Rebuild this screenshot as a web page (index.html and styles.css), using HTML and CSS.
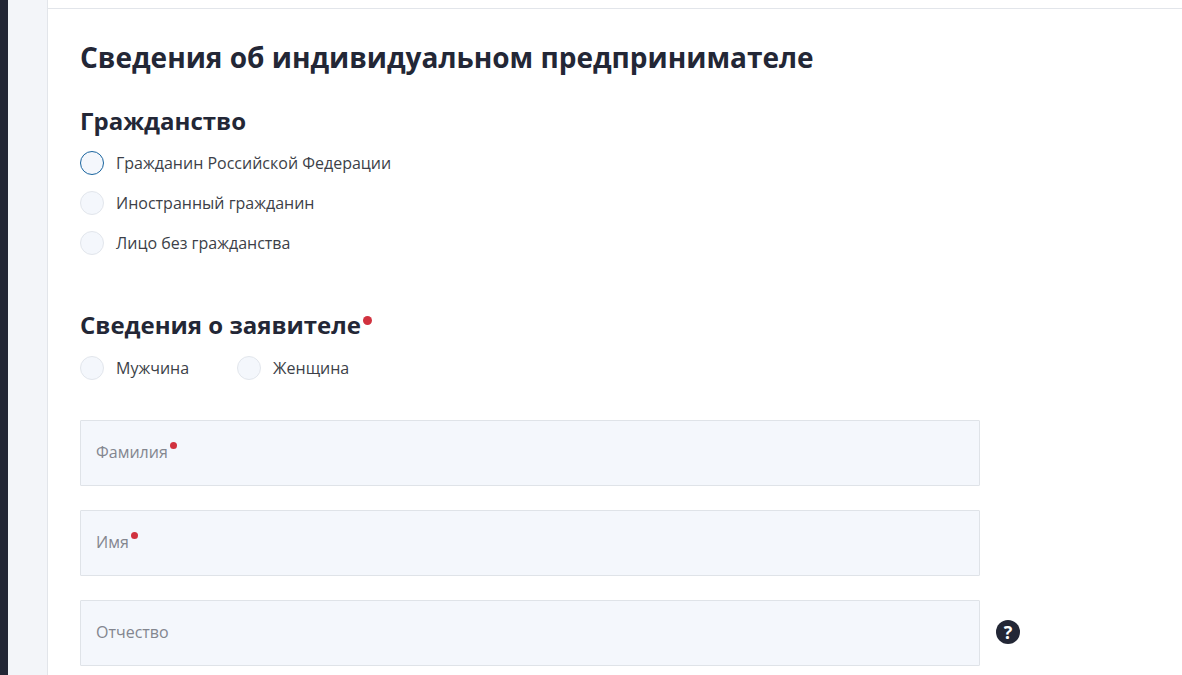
FILE: index.html
```html
<!DOCTYPE html>
<html>
<head>
    <meta charset="utf-8">
    <link rel="stylesheet" href="styles.css">
</head>
<body>
    <div class="rail"></div>
    <div class="gutter"></div>
    <div class="main">
        <div class="top-strip"></div>
        <div class="content">
            <h1 class="page-title">Сведения об индивидуальном предпринимателе</h1>

            <h2 class="section-title">Гражданство</h2>
            <div class="radio-list">
                <label class="radio-row"><span class="radio radio-focus"></span>Гражданин Российской Федерации</label>
                <label class="radio-row"><span class="radio"></span>Иностранный гражданин</label>
                <label class="radio-row"><span class="radio"></span>Лицо без гражданства</label>
            </div>

            <h2 class="section-title section-second">Сведения о заявителе<span class="req req-big"></span></h2>
            <div class="radio-inline">
                <label class="radio-row"><span class="radio"></span>Мужчина</label>
                <label class="radio-row"><span class="radio"></span>Женщина</label>
            </div>

            <div class="fields">
                <div class="field-row">
                    <div class="field">Фамилия<span class="req"></span></div>
                </div>
                <div class="field-row">
                    <div class="field">Имя<span class="req"></span></div>
                </div>
                <div class="field-row">
                    <div class="field">Отчество</div>
                    <span class="help">?</span>
                </div>
            </div>
        </div>
    </div>
</body>
</html>
```

FILE: styles.css
```css
body {
    margin: 0;
    height: 675px;
    overflow: hidden;
    display: flex;
    background: #fff;
    font-family: "Open Sans", sans-serif;
    color: #232736;
}

.rail {
    width: 8px;
    background: #232736;
}

.gutter {
    width: 39px;
    background: #f3f5f9;
    border-right: 1px solid #e2e5ea;
}

.main {
    flex: 1;
}

.top-strip {
    height: 8px;
    border-bottom: 1px solid #e2e5ea;
}

.content {
    padding: 29px 0 0 32px;
}

.page-title {
    margin: 0;
    font-size: 28px;
    line-height: 38px;
    font-weight: 700;
}

.section-title {
    margin: 28px 0 0;
    font-size: 24px;
    line-height: 33px;
    font-weight: 700;
}

.section-second {
    margin-top: 53px;
}

.radio-list {
    margin-top: 14px;
    display: flex;
    flex-direction: column;
    gap: 16px;
}

.radio-inline {
    margin-top: 15px;
    display: flex;
    gap: 48px;
}

.radio-row {
    display: flex;
    align-items: center;
    gap: 12px;
    height: 24px;
    font-size: 16px;
    color: #3c3f48;
}

.radio {
    width: 22px;
    height: 22px;
    border: 1px solid #e2e6ec;
    border-radius: 50%;
    background: #f4f7fc;
}

.radio-focus {
    border-color: #1a659f;
}

.req {
    display: inline-block;
    width: 7px;
    height: 7px;
    margin-left: 2px;
    border-radius: 50%;
    background: #d1323f;
    vertical-align: 9px;
}

.req-big {
    width: 9px;
    height: 9px;
    vertical-align: 9px;
}

.fields {
    margin-top: 40px;
    display: flex;
    flex-direction: column;
    gap: 24px;
}

.field-row {
    display: flex;
    align-items: center;
    gap: 16px;
}

.field {
    box-sizing: border-box;
    width: 900px;
    height: 66px;
    padding: 20px 15px 0;
    line-height: 22px;
    background: #f4f7fc;
    border: 1px solid #dfe3e8;
    border-radius: 1px;
    font-size: 16px;
    color: #83868f;
}

.help {
    width: 24px;
    height: 24px;
    margin-bottom: 2px;
    border-radius: 50%;
    background: #232736;
    color: #fff;
    font-size: 18px;
    font-weight: 700;
    line-height: 24px;
    text-align: center;
}
```
